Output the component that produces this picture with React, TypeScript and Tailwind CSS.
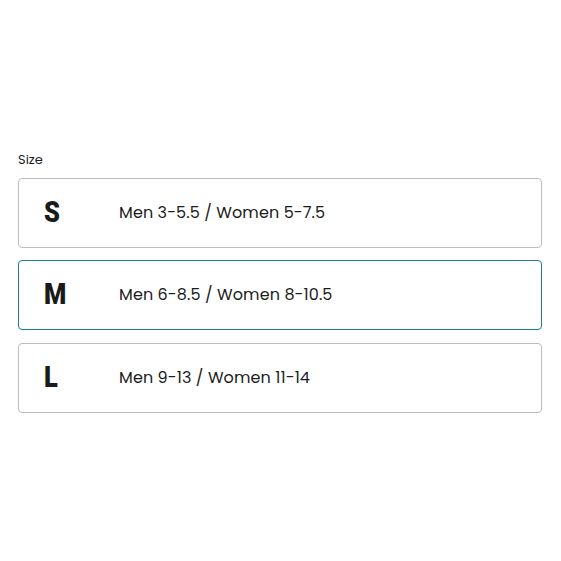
const SIZES = [
    { code: 'S', label: 'Men 3-5.5 / Women 5-7.5' },
    { code: 'M', label: 'Men 6-8.5 / Women 8-10.5' },
    { code: 'L', label: 'Men 9-13 / Women 11-14' },
];

export default function App() {
    const selected = 'M';

    return (
        <div className="flex min-h-screen flex-col justify-center bg-white px-[18px] pt-[3px] font-['Poppins','Inter',sans-serif] text-[#1c1c1c]">
            <label className="mb-[10px] text-[13px] leading-4">Size</label>
            <div className="flex flex-col gap-[12.5px]">
                {SIZES.map((size) => (
                    <button
                        key={size.code}
                        type="button"
                        className={
                            size.code === selected
                                ? 'flex h-[70px] w-[524px] items-center rounded border border-[#1f7d89] bg-white text-left'
                                : 'flex h-[70px] w-[524px] items-center rounded border border-[#bdbdbd] bg-white text-left'
                        }
                    >
                        <span className="w-[100px] pl-[25px]">
                            <span className="inline-block origin-left scale-x-[0.85] font-['Roboto',sans-serif] text-[30px] font-black leading-none text-[#1a1a1a]">
                                {size.code}
                            </span>
                        </span>
                        <span className="text-[16px] tracking-[0.1px]">{size.label}</span>
                    </button>
                ))}
            </div>
        </div>
    );
}
